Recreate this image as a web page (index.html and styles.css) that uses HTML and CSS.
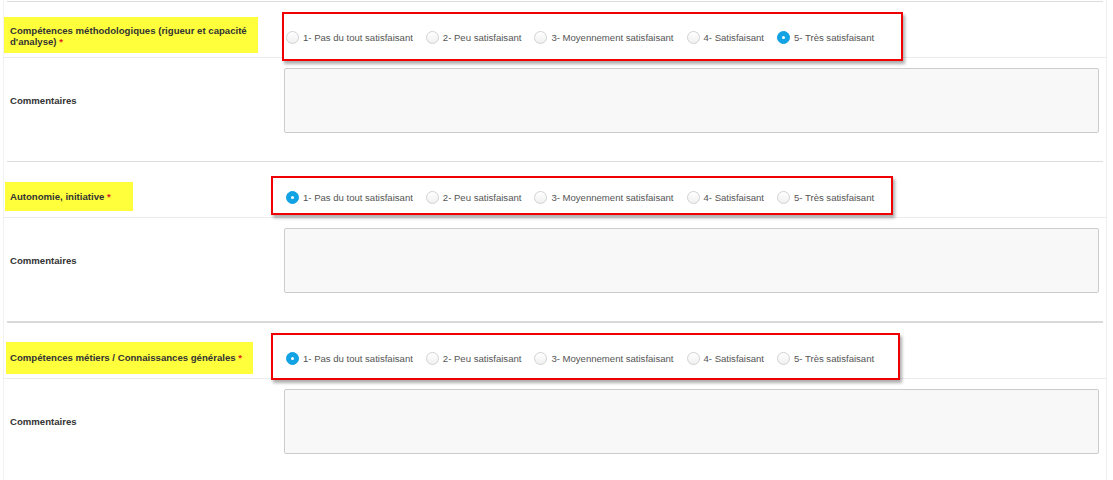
FILE: index.html
```html
<!DOCTYPE html>
<html lang="fr">
<head>
<meta charset="utf-8">
<title>Évaluation</title>
<link rel="stylesheet" href="styles.css">
</head>
<body>
<div class="panel">

  <section class="section">
    <div class="sep"></div>
    <div class="rating-row">
      <div class="label-cell">
        <span class="hl hl-1">Compétences méthodologiques (rigueur et capacité<br>d'analyse) <span class="req">*</span></span>
      </div>
      <div class="radio-cell">
        <div class="mark mark-1"></div>
        <div class="radios">
          <label class="opt"><span class="radio"></span>1- Pas du tout satisfaisant</label>
          <label class="opt"><span class="radio"></span>2- Peu satisfaisant</label>
          <label class="opt"><span class="radio"></span>3- Moyennement satisfaisant</label>
          <label class="opt"><span class="radio"></span>4- Satisfaisant</label>
          <label class="opt"><span class="radio checked"></span>5- Très satisfaisant</label>
        </div>
      </div>
    </div>
    <div class="comment-row">
      <div class="comment-label">Commentaires</div>
      <textarea class="comment-box"></textarea>
    </div>
  </section>

  <section class="section">
    <div class="sep"></div>
    <div class="rating-row">
      <div class="label-cell">
        <span class="hl hl-2">Autonomie, initiative <span class="req">*</span></span>
      </div>
      <div class="radio-cell">
        <div class="mark mark-2"></div>
        <div class="radios">
          <label class="opt"><span class="radio checked"></span>1- Pas du tout satisfaisant</label>
          <label class="opt"><span class="radio"></span>2- Peu satisfaisant</label>
          <label class="opt"><span class="radio"></span>3- Moyennement satisfaisant</label>
          <label class="opt"><span class="radio"></span>4- Satisfaisant</label>
          <label class="opt"><span class="radio"></span>5- Très satisfaisant</label>
        </div>
      </div>
    </div>
    <div class="comment-row">
      <div class="comment-label">Commentaires</div>
      <textarea class="comment-box"></textarea>
    </div>
  </section>

  <section class="section">
    <div class="sep sep-thick"></div>
    <div class="rating-row">
      <div class="label-cell">
        <span class="hl hl-3">Compétences métiers / Connaissances générales <span class="req">*</span></span>
      </div>
      <div class="radio-cell">
        <div class="mark mark-3"></div>
        <div class="radios">
          <label class="opt"><span class="radio checked"></span>1- Pas du tout satisfaisant</label>
          <label class="opt"><span class="radio"></span>2- Peu satisfaisant</label>
          <label class="opt"><span class="radio"></span>3- Moyennement satisfaisant</label>
          <label class="opt"><span class="radio"></span>4- Satisfaisant</label>
          <label class="opt"><span class="radio"></span>5- Très satisfaisant</label>
        </div>
      </div>
    </div>
    <div class="comment-row">
      <div class="comment-label">Commentaires</div>
      <textarea class="comment-box"></textarea>
    </div>
  </section>

</div>
</body>
</html>
```

FILE: styles.css
```css
* { box-sizing: border-box; }

html, body {
  margin: 0;
  padding: 0;
  background: #fff;
}

body {
  font-family: "Liberation Sans", Arial, sans-serif;
  font-size: 9.6px;
  color: #333;
}

.panel {
  margin-left: 3px;
  width: 1104px;
  min-height: 480px;
  padding-top: 1px;
  border-left: 1px solid #f1f1f1;
  border-right: 1px solid #eeeeee;
}

.sep {
  height: 1px;
  margin: 0 3px;
  background: #dddddd;
}

.sep-thick {
  height: 2px;
  background: #d9d9d9;
}

.rating-row {
  display: grid;
  grid-template-columns: 280px 1fr;
  align-items: center;
  height: 56px;
  padding-top: 15px;
  border-bottom: 1px solid #ececec;
}

.label-cell {
  align-self: start;
}

.hl {
  display: inline-block;
  background: #ffff3b;
  font-weight: bold;
  line-height: 11px;
  color: #333;
}

.hl-1 { padding: 8px 11px 6px 6px; margin-top: 0; }
.hl-2 { padding: 9px 22px 9px 5px; margin: 5px 0 0 1px; }
.hl-3 { padding: 10px 11px 11px 4px; margin: 4px 0 0 2px; }

.req { color: #e02020; }

.radio-cell {
  position: relative;
}

.mark {
  position: absolute;
  z-index: 0;
  background: #fff;
  border: 2px solid #f00000;
  box-shadow: 2px 3px 3px rgba(0, 0, 0, 0.32);
}

.mark-1 { left: -2px; top: -19px; width: 621px; height: 49px; }
.mark-2 { left: -13px; top: -15px; width: 622px; height: 39px; }
.mark-3 { left: -13px; top: -19px; width: 629px; height: 47px; }

.radios {
  position: relative;
  z-index: 1;
  display: flex;
  align-items: center;
  padding-left: 2px;
  letter-spacing: -0.02px;
}

.opt {
  display: flex;
  align-items: center;
  margin-right: 13px;
  color: #555;
  line-height: 13px;
  white-space: nowrap;
}

.radio {
  width: 13px;
  height: 13px;
  margin-right: 4px;
  border-radius: 50%;
  border: 1px solid #d2d2d2;
  background: linear-gradient(#ffffff, #f0f0f0);
  flex: none;
  position: relative;
}

.radio.checked {
  border-color: #11a0e2;
  background: #12a3e4;
}

.radio.checked::after {
  content: "";
  position: absolute;
  left: 4px;
  top: 4px;
  width: 3px;
  height: 3px;
  border-radius: 50%;
  background: #fff;
}

.comment-row {
  display: grid;
  grid-template-columns: 280px 1fr;
  align-items: center;
  padding: 10px 7px 28px 0;
}

.comment-label {
  padding-left: 6px;
  font-weight: bold;
  color: #333;
}

.comment-box {
  display: block;
  width: 100%;
  height: 65px;
  margin: 0;
  resize: none;
  background: #f8f8f8;
  border: 1px solid #cccccc;
  border-radius: 2px;
  font-family: inherit;
}
```
